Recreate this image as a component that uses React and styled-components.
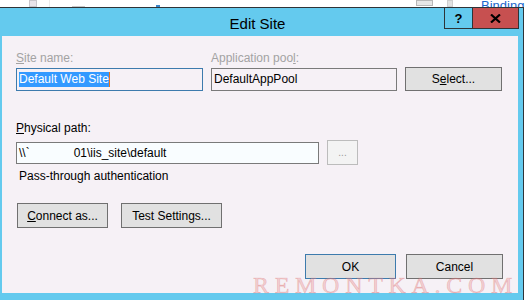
import React from "react";
import styled, { createGlobalStyle } from "styled-components";

const Global = createGlobalStyle`
  html, body { margin: 0; padding: 0; background: #ffffff; }
  body { font-family: "Liberation Sans", Arial, sans-serif; }
`;

const Root = styled.div`
  position: relative;
  width: 526px;
  height: 300px;
  overflow: hidden;
  background: #ffffff;
  font-family: "Liberation Sans", Arial, sans-serif;
  font-size: 12px;
  color: #000;
`;

const Strip = styled.div`
  height: 7px;
  display: flex;
  align-items: flex-start;
  overflow: hidden;
`;

const StripBox = styled.div`
  flex: none;
  margin-left: ${(p) => p.$ml}px;
  margin-top: ${(p) => p.$mt || 0}px;
  width: ${(p) => p.$w}px;
  height: ${(p) => p.$h}px;
  background: ${(p) => p.$bg};
  box-sizing: border-box;
  border: ${(p) => (p.$bd ? `1px solid ${p.$bd}` : "none")};
`;

const StripLink = styled.span`
  flex: none;
  margin-left: ${(p) => p.$ml}px;
  margin-top: -1px;
  font-size: 13px;
  line-height: 13px;
  color: #1a66cc;
  white-space: nowrap;
`;

const Window = styled.div`
  width: 523px;
  height: 292px;
  background: #64caee;
  border-top: 1px solid #2e3438;
  border-right: 1px solid #2e3438;
  border-bottom: 1px solid #2e3438;
  display: flex;
  flex-direction: column;
`;

const TitleBar = styled.div`
  height: 30px;
  display: grid;
  grid-template-columns: 1fr auto 1fr;
  align-items: start;
`;

const Title = styled.div`
  grid-column: 2;
  margin-top: 7px;
  margin-right: 8px;
  font-size: 15px;
  line-height: 17px;
  color: #000;
`;

const Controls = styled.div`
  grid-column: 3;
  justify-self: end;
  display: flex;
  margin-top: -1px;
  margin-right: 4px;
`;

const CaptionButton = styled.div`
  box-sizing: border-box;
  width: ${(p) => p.$w}px;
  height: 22px;
  background: ${(p) => p.$bg};
  border: 1px solid #2e3438;
  margin-left: ${(p) => (p.$joined ? "-1px" : "0")};
  display: flex;
  align-items: center;
  justify-content: center;
  font-weight: bold;
  font-size: 13px;
  color: #000;
`;

const Frame = styled.div`
  flex: 1;
  padding: 0 5px 7px 2px;
  display: flex;
`;

const Client = styled.div`
  flex: 1;
  background: #f6f1f6;
  padding: 15px 16px 14px 14px;
  display: flex;
  flex-direction: column;
`;

const TopGrid = styled.div`
  display: grid;
  grid-template-columns: 187px 186px 97px;
  column-gap: 8px;
  align-items: end;
`;

const Field = styled.div`
  display: flex;
  flex-direction: column;
`;

const Label = styled.div`
  height: 15px;
  line-height: 15px;
  color: ${(p) => (p.$disabled ? "#a3a3a3" : "#000")};
  margin-bottom: ${(p) => p.$mb || 0}px;
  white-space: nowrap;
`;

const U = styled.span`
  text-decoration: underline;
  text-underline-offset: 1px;
`;

const TextBox = styled.div`
  box-sizing: border-box;
  height: ${(p) => p.$h || 23}px;
  width: ${(p) => (p.$w ? `${p.$w}px` : "auto")};
  border: 1px solid ${(p) => (p.$focused ? "#3d7bad" : "#7a7a7a")};
  background: ${(p) => p.$bg || "transparent"};
  padding: 0 2px;
  line-height: ${(p) => (p.$h || 23) - 2}px;
  white-space: pre;
  overflow: hidden;
  display: flex;
  align-items: center;
`;

const Selection = styled.span`
  background: #3399ff;
  color: #fff;
  line-height: 15px;
  border-right: 1px solid #e8731c;
`;

const Gap = styled.span`
  display: inline-block;
  width: ${(p) => p.$w}px;
`;

const Button = styled.button`
  box-sizing: border-box;
  width: ${(p) => p.$w}px;
  height: ${(p) => p.$h || 25}px;
  padding: 0;
  margin: 0;
  background: #e1e1e1;
  border: 1px solid ${(p) => (p.$default ? "#3d7bad" : "#707070")};
  font-family: "Liberation Sans", Arial, sans-serif;
  font-size: 12px;
  color: #000;
  display: flex;
  align-items: center;
  justify-content: center;
`;

const BrowseButton = styled.div`
  box-sizing: border-box;
  width: 31px;
  height: 25px;
  border: 1px solid #bcbcbc;
  background: #f3f3f3;
  color: #9a9a9a;
  font-size: 10px;
  display: flex;
  align-items: flex-end;
  justify-content: center;
  padding-bottom: 6px;
`;

const PathBlock = styled.div`
  margin-top: 30px;
  display: flex;
  flex-direction: column;
`;

const PathRow = styled.div`
  display: flex;
  align-items: center;
  gap: 8px;
`;

const Note = styled.div`
  margin-top: 4px;
  line-height: 15px;
  margin-left: 3px;
`;

const ButtonRow = styled.div`
  display: flex;
  gap: ${(p) => p.$gap}px;
  margin-top: ${(p) => p.$mt}px;
  margin-left: ${(p) => p.$ml || 0}px;
  justify-content: ${(p) => (p.$end ? "flex-end" : "flex-start")};
  margin-right: ${(p) => p.$mr || 0}px;
`;

const Watermark = styled.div`
  position: absolute;
  left: 253px;
  top: 273px;
  font-family: "Liberation Serif", "Times New Roman", serif;
  font-size: 24px;
  line-height: 24px;
  letter-spacing: 5.7px;
  color: rgba(232, 140, 140, 0.35);
  -webkit-text-stroke: 0.6px rgba(215, 95, 95, 0.35);
  white-space: nowrap;
  pointer-events: none;
`;

export default function App() {
  return (
    <Root>
      <Global />
      <Strip>
        <StripBox $ml={29} $w={8} $h={7} $bg="#e9e4ea" $bd="#c9c6cc" />
        <StripBox $ml={12} $w={1} $h={7} $bg="#ececec" />
        <StripBox $ml={22} $mt={6} $w={13} $h={1} $bg="#c8c8c8" />
        <StripBox $ml={71} $mt={5} $w={4} $h={2} $bg="#3b86c8" />
        <StripBox $ml={256} $w={17} $h={6} $bg="#e6e6e6" $bd="#b8b8b8" />
        <StripBox $ml={14} $w={6} $h={7} $bg="#e2e2e2" $bd="#cfcfcf" />
        <StripLink $ml={28}>Binding</StripLink>
      </Strip>
      <Window>
        <TitleBar>
          <Title>Edit Site</Title>
          <Controls>
            <CaptionButton $w={29} $bg="#64caee">?</CaptionButton>
            <CaptionButton $w={47} $bg="#c75050" $joined>
              <svg width="11" height="9" viewBox="0 0 11 9">
                <path d="M1 0.5 L10 8.5 M10 0.5 L1 8.5" stroke="#000" strokeWidth="2.2" />
              </svg>
            </CaptionButton>
          </Controls>
        </TitleBar>
        <Frame>
          <Client>
            <TopGrid>
              <Field>
                <Label $disabled $mb={2}>
                  <U>S</U>ite name:
                </Label>
                <TextBox $focused>
                  <Selection>Default Web Site</Selection>
                </TextBox>
              </Field>
              <Field>
                <Label $disabled $mb={2}>
                  Application poo<U>l</U>:
                </Label>
                <TextBox>DefaultAppPool</TextBox>
              </Field>
              <Button $h={24} $w={97}>
                S<U>e</U>lect...
              </Button>
            </TopGrid>
            <PathBlock>
              <Label $mb={4}>
                <U>P</U>hysical path:
              </Label>
              <PathRow>
                <TextBox $w={303} $h={22} $bg="#f9fdff">
                  {"\\\\`"}
                  <Gap $w={44} />
                  {"01\\iis_site\\default"}
                </TextBox>
                <BrowseButton>...</BrowseButton>
              </PathRow>
            </PathBlock>
            <Note>Pass-through authentication</Note>
            <ButtonRow $gap={13} $mt={19} $ml={1}>
              <Button $w={91}>
                <U>C</U>onnect as...
              </Button>
              <Button $w={101}>
                Test Settin<U>g</U>s...
              </Button>
            </ButtonRow>
            <ButtonRow $gap={10} $mt={26} $end $mr={-1}>
              <Button $w={91} $default>
                OK
              </Button>
              <Button $w={97}>Cancel</Button>
            </ButtonRow>
          </Client>
        </Frame>
      </Window>
      <Watermark>REMONTKA.COM</Watermark>
    </Root>
  );
}
